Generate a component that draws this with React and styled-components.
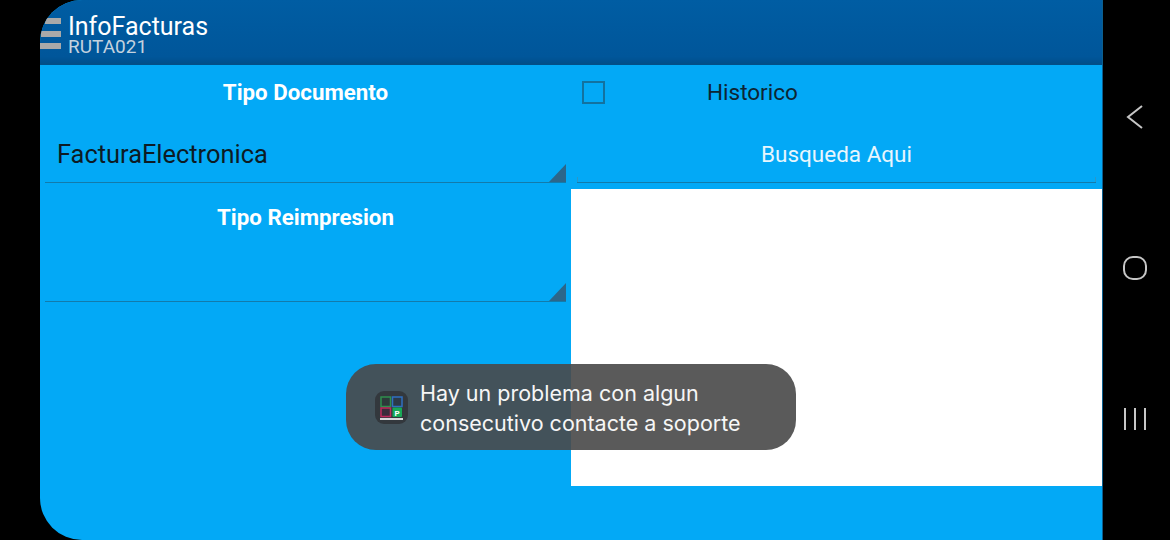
import React from "react";
import styled, { createGlobalStyle } from "styled-components";

const GlobalStyle = createGlobalStyle`
  html, body {
    margin: 0;
    padding: 0;
    background: #000;
  }
  * {
    box-sizing: border-box;
  }
`;

const Phone = styled.div`
  position: relative;
  width: 1170px;
  height: 540px;
  display: flex;
  background: #000;
  overflow: hidden;
  font-family: Roboto, "Liberation Sans", sans-serif;
`;

const Screen = styled.main`
  width: 1063px;
  margin-left: 40px;
  height: 540px;
  display: flex;
  flex-direction: column;
  background: #03a9f6;
  border-radius: 42px 0 0 42px;
  border-right: 1px solid #0b5f8f;
  overflow: hidden;
`;

const AppBar = styled.header`
  flex: 0 0 65px;
  display: flex;
  align-items: flex-start;
  background: linear-gradient(180deg, #005da3 0%, #00569a 90%, #004f8c 100%);
  border-bottom: 2px solid #024f88;
  color: #fff;
`;

const Burger = styled.div`
  width: 21px;
  margin: 18px 7px 0 0;
  display: flex;
  flex-direction: column;
  gap: 6.5px;
`;

const BurgerLine = styled.span`
  display: block;
  height: 6px;
  margin-left: ${({ $inset }) => $inset}px;
  background: #a9a9a9;
`;

const Titles = styled.div`
  padding-top: 14px;
  display: flex;
  flex-direction: column;
`;

const Title = styled.div`
  font-size: 25px;
  line-height: 25px;
`;

const Subtitle = styled.div`
  font-size: 19px;
  line-height: 15px;
  color: #c4d2df;
`;

const Body = styled.div`
  flex: 1;
  display: grid;
  grid-template-columns: 531px 531px;
`;

const LeftColumn = styled.section`
  display: flex;
  flex-direction: column;
  padding: 0 5px;
`;

const RightColumn = styled.section`
  display: flex;
  flex-direction: column;
`;

const Label = styled.div`
  height: ${({ $h }) => $h}px;
  padding-top: ${({ $top }) => $top}px;
  text-align: center;
  color: #fff;
  font-size: 22.3px;
  line-height: 26px;
  font-weight: 700;
`;

const Spinner = styled.div`
  position: relative;
  height: 61px;
  padding: 17px 0 0 12px;
  font-size: 25.4px;
  line-height: 30px;
  color: #0d1b24;
  border-bottom: 1px solid #137bab;
`;

const Arrow = styled.svg`
  position: absolute;
  right: 0;
  bottom: 0;
  width: 17px;
  height: 18px;
  fill: #2c668a;
`;

const TopRow = styled.div`
  height: 60px;
  display: flex;
  align-items: flex-start;
  padding: 16px 0 0 11px;
`;

const CheckBox = styled.span`
  width: 23px;
  height: 23px;
  border: 2px solid #13729f;
`;

const CheckLabel = styled.span`
  margin-left: 102px;
  margin-top: -1px;
  font-size: 22.5px;
  line-height: 24px;
  color: #0d2533;
`;

const SearchField = styled.div`
  position: relative;
  height: 58px;
  margin: 0 6px;
  padding-top: 14px;
  text-align: center;
  font-size: 22.5px;
  line-height: 30px;
  color: #e8f6fd;
  border-bottom: 1px solid #137bab;

  &::before,
  &::after {
    content: "";
    position: absolute;
    bottom: 0;
    width: 1px;
    height: 5px;
    background: #2b97c9;
  }
  &::before {
    left: 0;
  }
  &::after {
    right: 0;
  }
`;

const ResultsPanel = styled.div`
  margin-top: 6px;
  height: 297px;
  background: #fff;
`;

const Toast = styled.div`
  position: absolute;
  left: 346px;
  top: 364px;
  width: 450px;
  height: 86px;
  display: flex;
  align-items: center;
  gap: 12px;
  padding-left: 29px;
  background: rgba(74, 74, 74, 0.91);
  border-radius: 30px;
  color: #f6f6f6;
  font-family: Inter, "Noto Sans", sans-serif;
  font-size: 21.5px;
  line-height: 30px;
`;

const ToastText = styled.div`
  margin-top: 2px;
`;

const ToastIcon = styled.svg`
  width: 33px;
  height: 33px;
  flex: none;
`;

const NavBar = styled.nav`
  width: 67px;
  display: flex;
  flex-direction: column;
  align-items: center;
  padding: 102px 3px 0 0;
  gap: 121px;
`;

const NavIcon = styled.svg`
  width: 30px;
  height: 30px;
  flex: none;
  fill: none;
  stroke: #c6c6c6;
  stroke-width: 2;
`;

export default function App() {
  return (
    <>
      <GlobalStyle />
      <Phone>
        <Screen>
          <AppBar>
            <Burger>
              <BurgerLine $inset={5} />
              <BurgerLine $inset={1} />
              <BurgerLine $inset={0} />
            </Burger>
            <Titles>
              <Title>InfoFacturas</Title>
              <Subtitle>RUTA021</Subtitle>
            </Titles>
          </AppBar>
          <Body>
            <LeftColumn>
              <Label $h={57} $top={14}>Tipo Documento</Label>
              <Spinner>
                FacturaElectronica
                <Arrow viewBox="0 0 17 18"><path d="M17 0V18H0Z" /></Arrow>
              </Spinner>
              <Label $h={58} $top={21}>Tipo Reimpresion</Label>
              <Spinner>
                <Arrow viewBox="0 0 17 18"><path d="M17 0V18H0Z" /></Arrow>
              </Spinner>
            </LeftColumn>
            <RightColumn>
              <TopRow>
                <CheckBox />
                <CheckLabel>Historico</CheckLabel>
              </TopRow>
              <SearchField>Busqueda Aqui</SearchField>
              <ResultsPanel />
            </RightColumn>
          </Body>
        </Screen>
        <NavBar>
          <NavIcon viewBox="0 0 30 30"><path d="M22 4 8 15l14 11" /></NavIcon>
          <NavIcon viewBox="0 0 30 30"><rect x="4" y="4" width="22" height="22" rx="9" /></NavIcon>
          <NavIcon viewBox="0 0 30 30"><path d="M5 4v22M15 4v22M25 4v22" /></NavIcon>
        </NavBar>
        <Toast>
          <ToastIcon viewBox="0 0 33 33">
            <rect width="33" height="33" rx="9" fill="#33383d" />
            <rect x="6" y="6" width="9.500" height="9.500" fill="#2c3a3a" stroke="#2f8f4e" strokeWidth="1.500" />
            <rect x="17.500" y="6" width="9.500" height="9.500" fill="#2c3a48" stroke="#2f6fc0" strokeWidth="1.500" />
            <rect x="6" y="17" width="9.500" height="8.500" fill="#3a2c3a" stroke="#c02a5c" strokeWidth="1.500" />
            <rect x="17.500" y="16.500" width="9.500" height="9.500" rx="1" fill="#18a957" />
            <text x="22.200" y="24.500" fontSize="8" fontWeight="700" fill="#fff" textAnchor="middle" fontFamily="Roboto, sans-serif">P</text>
            <rect x="5" y="27" width="23" height="2" fill="#d8d8d8" />
          </ToastIcon>
          <ToastText>
            Hay un problema con algun
            <br />
            consecutivo contacte a soporte
          </ToastText>
        </Toast>
      </Phone>
    </>
  );
}
